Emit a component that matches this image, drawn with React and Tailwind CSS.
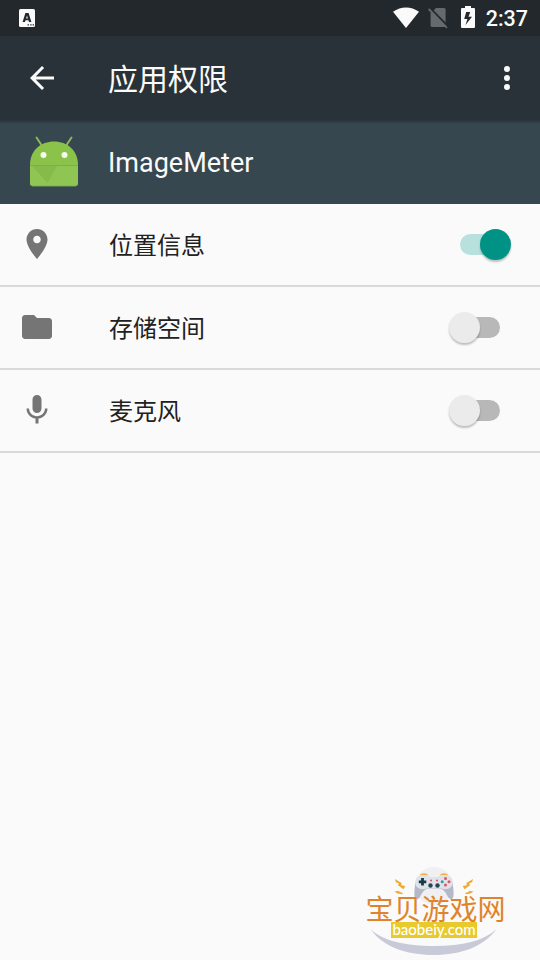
const PERMISSIONS = [
  {
    label: '位置信息',
    enabled: true,
    icon: 'M12 2C8.13 2 5 5.13 5 9c0 5.25 7 13 7 13s7-7.75 7-13c0-3.87-3.13-7-7-7zm0 9.5c-1.38 0-2.5-1.12-2.5-2.5s1.12-2.5 2.5-2.5 2.5 1.12 2.5 2.5-1.12 2.5-2.5 2.5z',
  },
  {
    label: '存储空间',
    enabled: false,
    icon: 'M10 4H4c-1.1 0-1.99.9-1.99 2L2 18c0 1.1.9 2 2 2h16c1.1 0 2-.9 2-2V8c0-1.1-.9-2-2-2h-8l-2-2z',
  },
  {
    label: '麦克风',
    enabled: false,
    icon: 'M12 14c1.66 0 2.99-1.34 2.99-3L15 5c0-1.66-1.34-3-3-3S9 3.34 9 5v6c0 1.66 1.34 3 3 3zm5.3-3c0 3-2.54 5.1-5.3 5.1S6.7 14 6.7 11H5c0 3.41 2.72 6.23 6 6.72V21h2v-3.28c3.28-.48 6-3.3 6-6.72h-1.7z',
  },
];

function StatusBar() {
  return (
    <div className="flex h-9 items-center bg-[#22282c] pl-[19px] pr-[12px] text-[#fafafa]">
      <svg className="h-[18px] w-4" viewBox="0 0 16 18">
        <rect width="16" height="18" rx="1.5" fill="#fafafa" />
        <path d="M6.4 4h3.2l2.8 9H10l-.5-1.8h-3L6 13H3.600zM8 6.500l-.9 3h1.800z" fill="#22282c" fillRule="evenodd" />
        <path d="M8.5 15.8h1.4M11.2 15.8h1.4M13.6 15.8h1.4" stroke="#22282c" strokeWidth="1.3" />
      </svg>
      <div className="ml-auto flex items-center">
        <svg className="h-[22px] w-[26px]" viewBox="0 0 26 22">
          <path d="M0 4.800C8-1 18-1 26 4.800L13 21z" fill="#fafafa" />
        </svg>
        <svg className="ml-[9px] h-[22px] w-[21px]" viewBox="0 0 21 22">
          <path d="M8 1h8a1.6 1.6 0 0 1 1.6 1.6V20H4.2A1.6 1.6 0 0 1 2.6 18.4V6.4z" fill="#646a6d" />
          <path d="M1.5.5 20.3 19.800" stroke="#22282c" strokeWidth="2" />
          <path d="M.7 2 19 20.800" stroke="#646a6d" strokeWidth="1.8" />
        </svg>
        <svg className="mb-[2px] ml-3 h-[22px] w-[14px]" viewBox="0 0 14 22">
          <path d="M4 0h6v2h3a1 1 0 0 1 1 1v18a1 1 0 0 1-1 1H1a1 1 0 0 1-1-1V3a1 1 0 0 1 1-1h3z" fill="#fafafa" />
          <path d="M9.2 6H5.200L3.200 13h3.200L4.500 19 11 10.800H7.500z" fill="#22282c" />
        </svg>
        <span className="ml-[11px] mt-[2px] text-[21.5px] leading-none font-medium">2:37</span>
      </div>
    </div>
  );
}

function Toolbar() {
  return (
    <header className="flex h-[84px] items-center bg-[#283238] pl-6 pr-[15px] text-[#fafafa]">
      <svg className="size-9" viewBox="0 0 24 24" fill="currentColor">
        <path d="M20 11H7.83l5.59-5.59L12 4l-8 8 8 8 1.41-1.41L7.83 13H20v-2z" />
      </svg>
      <h1 className="mt-1 ml-12 text-[30px] leading-none">应用权限</h1>
      <svg className="ml-auto size-9" viewBox="0 0 24 24" fill="currentColor">
        <circle cx="12" cy="6" r="2" />
        <circle cx="12" cy="12" r="2" />
        <circle cx="12" cy="18" r="2" />
      </svg>
    </header>
  );
}

function AndroidIcon() {
  return (
    <svg className="h-[52px] w-[50px]" viewBox="0 0 50 52">
      <path d="m7.5 1.500 6 9M42.500 1.500l-6 9" stroke="#8cb85b" strokeWidth="2" strokeLinecap="round" />
      <path d="M1 29C1 14 12 5.500 25 5.500S49 14 49 29z" fill="#8bc34a" />
      <path d="M1 29h48v18.500a2.500 2.500 0 0 1-2.500 2.500h-43A2.500 2.500 0 0 1 1 47.500z" fill="#8ec553" />
      <path d="M3 30 18.500 47 28 30z" fill="#7fb347" opacity=".55" />
      <path d="M1 29.500h48" stroke="#7bb045" />
      <circle cx="14.500" cy="19" r="3" fill="#f4faec" />
      <circle cx="35.500" cy="19" r="3" fill="#f4faec" />
      <path d="M3 50.300h44" stroke="#5f8f4a" strokeWidth=".8" />
    </svg>
  );
}

function Switch({ on }) {
  return (
    <span role="switch" aria-checked={on} className="relative h-[31px] w-[62px]">
      <span className={`absolute top-[5px] left-[11px] h-[21px] w-10 rounded-full ${on ? 'bg-[#b8e1dd]' : 'bg-[#b8b8b8]'}`} />
      <span className={`absolute top-0 size-[31px] rounded-full shadow-[0_2px_2px_rgba(0,0,0,0.24)] ${on ? 'left-[31px] bg-[#009385]' : 'left-0 bg-[#ebebeb]'}`} />
    </span>
  );
}

function PermissionRow({ label, enabled, icon }) {
  return (
    <li className="flex h-[83px] items-start border-b-2 border-[#dadada] pl-[19px] pr-[29px]">
      <svg className="mt-[22px] size-9" viewBox="0 0 24 24" fill="#757575">
        <path d={icon} />
      </svg>
      <span className="mt-[30px] ml-[54px] text-2xl leading-6 text-[#212121]">{label}</span>
      <span className="mt-[25px] ml-auto flex">
        <Switch on={enabled} />
      </span>
    </li>
  );
}

function SiteBadge() {
  return (
    <div className="absolute bottom-0 left-[355px] flex h-[100px] w-[160px] flex-col items-start pt-[35px]">
      <svg className="absolute inset-0 size-full" viewBox="0 0 160 100">
        <circle cx="79" cy="26" r="19" fill="#f0f0f2" />
        <path d="M15.5 69c12 12 36 17 64 17s49-5 62-17c-12 17-35 26-63 26S27 86 15.500 69z" fill="#c9cad8" />
        {/* sparks */}
        <g fill="#efaa32">
          <path d="m40 19 6.500 4-.2 2.200 4 .8-1.800 3.200-5.500-4 .8-2-3-1zM39.500 31.500l4.500-.8.5 1.200 3.500 1-1 1.300-4.500-.8zM118 19l-6.500 4 .2 2.200-4 .8 1.800 3.200 5.500-4-.8-2 3-1zM118.500 31.500l-4.500-.8-.5 1.200-3.500 1 1 1.300 4.500-.8z" />
        </g>
        {/* controller */}
        <path d="M65.500 15.300q3.500-2.300 7 0M85.500 15.300q3.500-2.300 7 0" fill="none" stroke="#efb443" strokeWidth="1.800" />
        <path d="M62 18c-2 4-3 14-2.500 18 .5 4 3.500 4 5.500 1 2-4 4-8 9-8.500h10c5 .5 7 4.500 9 8.500 2 3 5 3 5.500-1S98 22 96 18z" fill="#b5b8c9" />
        <path d="M63 16.500c4-2 10-2 12 .5h8c2-2.500 8-2.500 12-.5 3 2 3.500 8 1 10.500-3 3-8 2.500-11 1H73c-3 1.500-8 2-11-1-2.500-2.500-2-8.500 1-10.500z" fill="#e0e2ea" />
        <path d="M67.500 18v7.500M63.800 21.800h7.500" stroke="#173c49" strokeWidth="2.8" />
        <circle cx="90.500" cy="18.500" r="1.500" fill="#dc5662" />
        <circle cx="90.500" cy="25" r="1.500" fill="#dc5662" />
        <circle cx="87.200" cy="21.800" r="1.500" fill="#2c9aaa" />
        <circle cx="94" cy="21.800" r="1.500" fill="#dc5662" />
        <circle cx="76" cy="20.500" r="1" fill="#d55263" />
        <circle cx="82" cy="20.500" r="1" fill="#d55263" />
        <circle cx="75.500" cy="25.500" r="2.200" fill="#264553" />
        <circle cx="82.500" cy="25.500" r="2.200" fill="#264553" />
      </svg>
      <span className="relative ml-[10.5px] flex h-[27px] items-center text-[28px] leading-[27px] whitespace-nowrap text-[#df842d]">
        <span className="mt-1">宝贝游戏网</span>
      </span>
      <span className="relative ml-9 flex h-4 w-[86px] items-center justify-center bg-[#e8ca2e] pb-px font-[Lato] text-[15px] leading-[15px] font-medium text-white">baobeiy.com</span>
    </div>
  );
}

export default function App() {
  return (
    <div className="relative h-[960px] w-[540px] overflow-hidden bg-[#fafafa] font-[Roboto,'Noto_Sans_CJK_SC',sans-serif]">
      <StatusBar />
      <Toolbar />
      <section className="flex h-[84px] items-center bg-linear-to-b from-[#283238] to-[#37474f] to-[4px] pl-[29px]">
        <AndroidIcon />
        <h2 className="mt-[2px] ml-[29px] text-[27px] leading-none text-[#fafafa]">ImageMeter</h2>
      </section>
      <ul>
        {PERMISSIONS.map(p => (
          <PermissionRow key={p.label} {...p} />
        ))}
      </ul>
      <SiteBadge />
    </div>
  );
}
